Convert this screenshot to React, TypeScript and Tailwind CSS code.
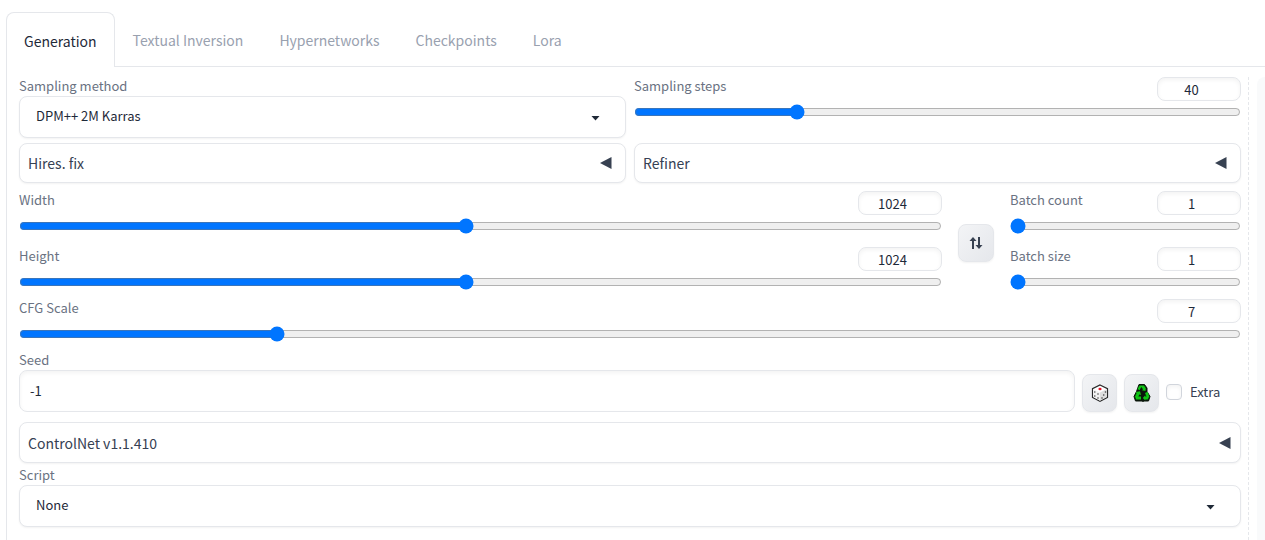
import { useState } from "react";
import type { ReactNode } from "react";

const tabs = ["Generation", "Textual Inversion", "Hypernetworks", "Checkpoints", "Lora"];

function FieldLabel({ htmlFor, children }: { htmlFor: string; children: ReactNode }) {
  return (
    <label htmlFor={htmlFor} className="block h-[19px] text-[13px] leading-[17px] text-gray-500 whitespace-nowrap">
      {children}
    </label>
  );
}

type SliderProps = {
  id: string;
  label: string;
  min: number;
  max: number;
  initial: number;
  step?: number;
};

function SliderField({ id, label, min, max, initial, step = 1 }: SliderProps) {
  const [value, setValue] = useState(initial);

  return (
    <div>
      <div className="flex justify-between">
        <FieldLabel htmlFor={id}>{label}</FieldLabel>
        <input
          type="number"
          aria-label={`${label} value`}
          min={min}
          max={max}
          step={step}
          value={value}
          onChange={(e) => setValue(Number(e.target.value))}
          className="h-6 w-[84px] rounded-lg border border-gray-200 bg-white px-2 text-center text-[13px] leading-5 text-gray-800 shadow-[inset_0_2px_4px_0_rgba(0,0,0,0.05)]"
        />
      </div>
      <input
        id={id}
        type="range"
        min={min}
        max={max}
        step={step}
        value={value}
        onChange={(e) => setValue(Number(e.target.value))}
        className="mt-[3px] block h-4 w-full accent-[#0075ff]"
      />
    </div>
  );
}

function SelectField({ id, label, options }: { id: string; label: string; options: string[] }) {
  return (
    <div>
      <FieldLabel htmlFor={id}>{label}</FieldLabel>
      <div className="relative">
        <select
          id={id}
          className="block h-[42px] w-full appearance-none rounded-lg border border-gray-200 bg-white px-4 pb-[2px] text-[13px] text-gray-800 shadow-xs"
        >
          {options.map((option) => (
            <option key={option}>{option}</option>
          ))}
        </select>
        <svg className="pointer-events-none absolute top-5 right-[26px]" width="9" height="5" viewBox="0 0 9 5">
          <path d="M0.500 0h8L4.500 4.500z" fill="#1f2937" />
        </svg>
      </div>
    </div>
  );
}

function Accordion({ title, sizeClass }: { title: string; sizeClass: string }) {
  return (
    <button
      type="button"
      aria-expanded={false}
      className={`flex w-full items-center justify-between rounded-lg border border-gray-200 bg-white pl-2 text-sm text-gray-700 shadow-xs ${sizeClass}`}
    >
      <span>{title}</span>
      <svg width="12" height="12" viewBox="0 0 12 12">
        <path d="M0 6L11.500 0v12z" fill="#374151" />
      </svg>
    </button>
  );
}

function ToolButton({ label, sizeClass, children }: { label: string; sizeClass: string; children: ReactNode }) {
  return (
    <button
      type="button"
      aria-label={label}
      className={`flex h-[38px] shrink-0 items-center justify-center rounded-lg border border-gray-200 bg-gradient-to-br from-gray-100 to-gray-200 text-gray-700 shadow-xs ${sizeClass}`}
    >
      {children}
    </button>
  );
}

function SwapIcon() {
  return (
    <svg width="14" height="14" viewBox="0 0 14 14" fill="#374151">
      <path d="M4 1l3.500 4H5v8H3V5H0.500z" />
      <path d="M10 13l-3.500-4H9V1h2v8h2.500z" />
    </svg>
  );
}

function DiceIcon() {
  return (
    <svg width="18" height="20" viewBox="0 0 18 20">
      <path d="M9 2l7.500 3.700v8.600L9 18.300l-7.500-4V5.700z" fill="#fff" stroke="#2a2a2a" strokeWidth="1.200" />
      <path d="M9 9.500l7-3.500v8l-7 3.700z" fill="#dedede" />
      <path d="M2 6l7 3.500V17.700L2 14z" fill="#f1f1f1" />
      <ellipse cx="9" cy="6" rx="1.600" ry="1.200" fill="#e8182c" />
      <g fill="#444">
        <circle cx="3.800" cy="9" r="0.800" />
        <circle cx="7" cy="11" r="0.800" />
        <circle cx="3.800" cy="13" r="0.800" />
        <circle cx="7" cy="15" r="0.800" />
        <circle cx="14.500" cy="9" r="0.800" />
        <circle cx="12.700" cy="12" r="0.800" />
        <circle cx="11" cy="15" r="0.800" />
      </g>
    </svg>
  );
}

function RecycleIcon() {
  return (
    <svg width="20" height="20" viewBox="0 0 20 20" strokeLinejoin="round">
      <path d="M7 1.500h5.500l2.500 3.500v3.500l3 5-1.500 4.500H12l-1 .5-1-.5H3.500L2 13.500l2.500-5z" fill="#0b160b" stroke="#0b160b" strokeWidth="1" />
      <path d="M7.500 2.500H12l1.800 2.800-.3 2.700-3.500-.8 1-1L9.300 4 7.500 7.300 5.500 6z" fill="#0fc414" />
      <path d="M4 9l4-.8 1 3.800-1.700-.6-1 2H9v3.100H4.200L3 13.500l1.500-3z" fill="#0fc414" />
      <path d="M13 10l2.800-1.200 1.400 4.700-1.400 3h-2.500v1l-2.500-2.500 2.500-2.800v1.300h1.200z" fill="#0fc414" />
    </svg>
  );
}

export default function App() {
  const [activeTab, setActiveTab] = useState("Generation");

  return (
    <div className="min-h-screen overflow-hidden bg-white pt-3 pl-[6px] font-['Noto_Sans_CJK_SC',sans-serif]">
      {/* Tabs */}
      <div role="tablist" className="flex">
        {tabs.map((tab) => (
          <button
            key={tab}
            type="button"
            role="tab"
            aria-selected={tab === activeTab}
            onClick={() => setActiveTab(tab)}
            className={
              tab === activeTab
                ? "h-[55px] rounded-t-lg border border-b-0 border-gray-200 px-[17px] pt-[2px] text-sm whitespace-nowrap text-gray-800"
                : "h-[55px] border-b border-gray-200 px-[18px] pt-[2px] text-sm whitespace-nowrap text-gray-400"
            }
          >
            {tab}
          </button>
        ))}
        <div className="flex-1 border-b border-gray-200"></div>
      </div>

      {/* Settings panel */}
      <main className="flex min-h-[473px] border-l border-gray-200 pt-[10px] pl-3">
        <div className="min-w-0 flex-1">
          <div className="grid grid-cols-2 gap-x-2 gap-y-[5px]">
            <SelectField id="sampler" label="Sampling method" options={["DPM++ 2M Karras", "Euler a", "DDIM"]} />
            <SliderField id="steps" label="Sampling steps" min={1} max={150} initial={40} />
            <Accordion title="Hires. fix" sizeClass="h-10 pr-[13px]" />
            <Accordion title="Refiner" sizeClass="h-10 pr-[13px]" />
          </div>

          {/* Dimensions and batches */}
          <div className="mt-2 flex items-center gap-4">
            <div className="flex min-w-0 flex-1 flex-col gap-[13px]">
              <SliderField id="width" label="Width" min={64} max={2048} step={8} initial={1024} />
              <SliderField id="height" label="Height" min={64} max={2048} step={8} initial={1024} />
            </div>
            <ToolButton label="Switch width and height" sizeClass="mt-1 w-9">
              <SwapIcon />
            </ToolButton>
            <div className="flex w-[231px] flex-col gap-[13px]">
              <SliderField id="batch-count" label="Batch count" min={1} max={100} initial={1} />
              <SliderField id="batch-size" label="Batch size" min={1} max={8} initial={1} />
            </div>
          </div>

          <div className="mt-[9px]">
            <SliderField id="cfg" label="CFG Scale" min={1} max={30} step={0.5} initial={7} />
          </div>

          {/* Seed */}
          <div className="mt-[9px] flex items-end gap-[7px]">
            <div className="min-w-0 flex-1">
              <FieldLabel htmlFor="seed">Seed</FieldLabel>
              <input
                id="seed"
                type="number"
                defaultValue={-1}
                className="block h-[42px] w-full rounded-lg border border-gray-200 bg-white px-[10px] pb-[2px] text-[13px] text-gray-800 shadow-[inset_0_2px_4px_0_rgba(0,0,0,0.05)]"
              />
            </div>
            <ToolButton label="Random seed" sizeClass="w-[35px]">
              <DiceIcon />
            </ToolButton>
            <ToolButton label="Reuse seed" sizeClass="w-[35px]">
              <RecycleIcon />
            </ToolButton>
            <label className="flex h-[38px] w-[75px] items-center gap-2 pb-[2px] text-[13px] text-gray-700">
              <input
                type="checkbox"
                className="size-4 appearance-none rounded-sm border border-gray-300 bg-white shadow-[inset_0_2px_4px_0_rgba(0,0,0,0.05)] checked:bg-blue-600"
              />
              Extra
            </label>
          </div>

          <div className="mt-[10px] mb-[3px]">
            <Accordion title="ControlNet v1.1.410" sizeClass="h-[41px] pr-[9px]" />
          </div>

          <SelectField id="script" label="Script" options={["None", "Prompt matrix", "X/Y/Z plot"]} />
        </div>

        {/* Resize handle and gallery edge */}
        <div className="ml-[7px] border-l border-dashed border-gray-200"></div>
        <aside className="ml-2 w-2 rounded-tl-lg bg-gray-50"></aside>
      </main>
    </div>
  );
}
